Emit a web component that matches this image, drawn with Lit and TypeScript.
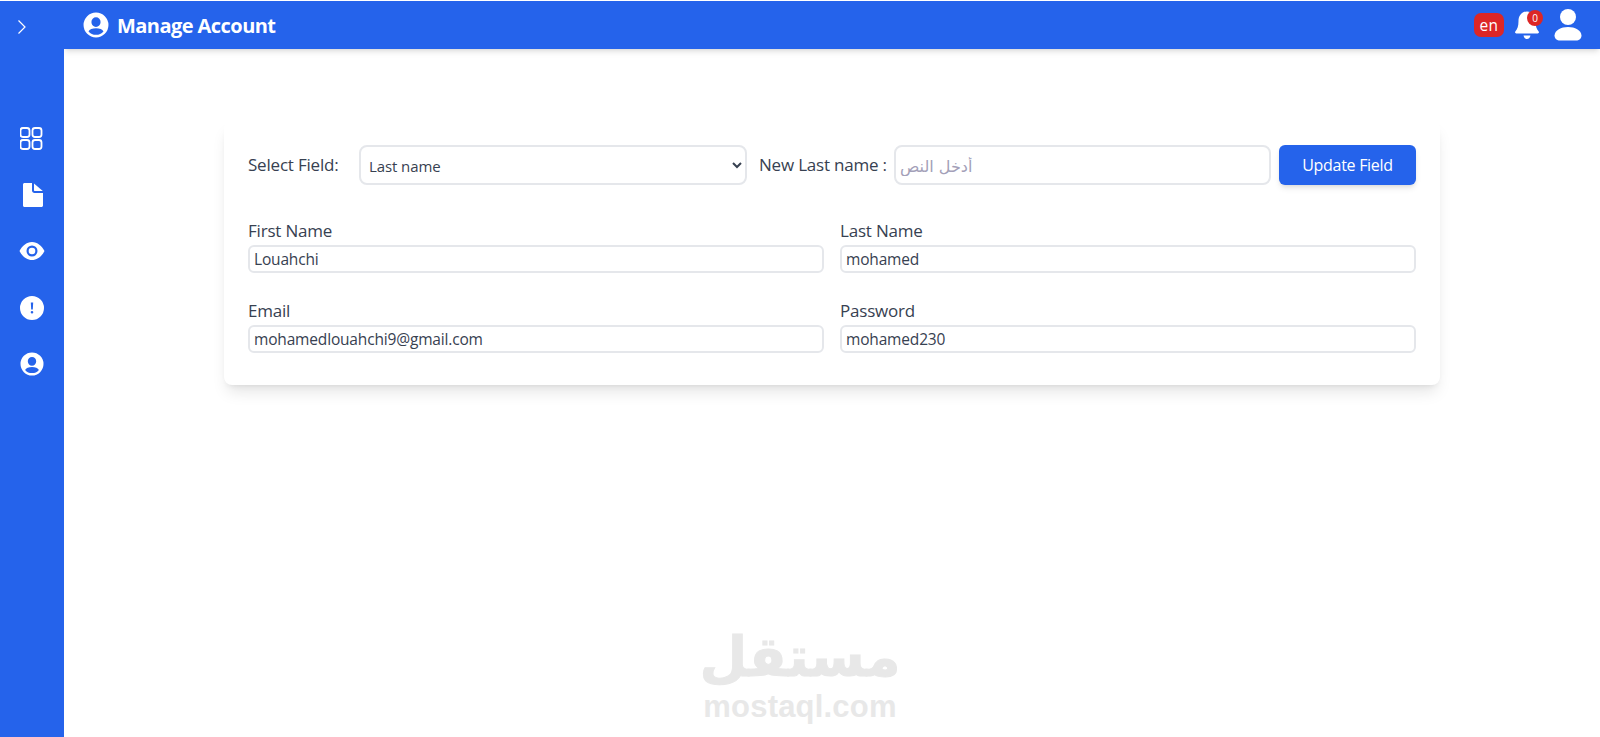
import { LitElement, html, css, svg } from "lit";
import { customElement } from "lit/decorators.js";

const personCircle = svg`<path fill="currentColor" d="M12 0.500a11.500 11.500 0 1 0 0 23a11.500 11.500 0 0 0 0-23Zm0 4.400a4.200 4.200 0 0 1 4.200 4.400c0 2.500-1.900 4.500-4.200 4.500s-4.200-2-4.200-4.500A4.200 4.200 0 0 1 12 4.900Zm0 16.200a9 9 0 0 1-6.900-3.200c.9-1.800 3.600-2.900 6.900-2.900s6 1.100 6.900 2.900a9 9 0 0 1-6.900 3.200Z"/>`;

@customElement("app-root")
export class AppRoot extends LitElement {
  static styles = css`
    :host { display: block; height: 737px; overflow: hidden; background: #fff; color: #374151;
      font-family: "Open Sans", "Noto Sans", sans-serif; position: relative; }
    .shell { display: flex; height: 736px; padding-top: 1px; }
    .side { width: 64px; flex: none; background: #2563eb; color: #fff; display: flex; flex-direction: column; align-items: center; }
    .chev { height: 48px; box-sizing: border-box; padding-top: 4px; display: flex; align-items: center; justify-content: center; margin-right: 20px; width: 24px; }
    .nav { display: flex; flex-direction: column; align-items: center; margin-top: 77px; gap: 32.5px; }
    .nav svg { display: block; }
    .right { flex: 1; display: flex; flex-direction: column; min-width: 0; }
    .bar { height: 48px; background: #2563eb; color: #fff; display: flex; align-items: center; padding: 0 18px 0 19px; box-shadow: 0 4px 6px -1px rgba(0,0,0,.1), 0 2px 4px -2px rgba(0,0,0,.1); clip-path: inset(0 0 -20px 0); position: relative; }
    .title { display: flex; align-items: center; gap: 8px; font-size: 20px; font-weight: 700; letter-spacing: -.55px; flex: 1; }
    .tools { display: flex; align-items: center; }
    .lang { width: 30px; height: 24px; background: #dc2626; border-radius: 7px; font-size: 15.5px; display: flex; align-items: center; justify-content: center; margin-right: 11px; letter-spacing: .3px; }
    .bell { position: relative; width: 24px; height: 30px; margin-right: 15px; }
    .badge { position: absolute; left: 12px; top: 0; width: 16px; height: 16px; border-radius: 50%; background: #dc2626; font-size: 10px; display: flex; align-items: center; justify-content: center; }
    main { flex: 1; padding: 72px 160px 0; }
    .card { background: #fff; border-radius: 8px; padding: 24px 24px 32px; box-shadow: 0 10px 15px -3px rgba(0,0,0,.1), 0 4px 6px -4px rgba(0,0,0,.1); display: flex; flex-direction: column; gap: 32px; }
    .top { display: flex; align-items: center; }
    .lbl { font-size: 17px; letter-spacing: -.2px; white-space: nowrap; line-height: 24px; }
    .l1 { width: 111px; flex: none; }
    .l2 { width: 135px; flex: none; margin-left: 12px; }
    select { width: 388px; flex: none; height: 40px; border: 2px solid #e5e7eb; border-radius: 8px; background: #fff; color: #374151; font: 15px "Open Sans", sans-serif; letter-spacing: -.1px; padding: 2px 4px 0; box-sizing: border-box; outline: none; }
    .newv { width: 377px; flex: none; height: 40px; box-sizing: border-box; border: 2px solid #e5e7eb; border-radius: 8px; padding: 2px 4px 0; font: 16px "DejaVu Sans", sans-serif; text-align: left; outline: none; }
    .newv::placeholder { color: #a3a0b8; }
    button { margin-left: 8px; width: 137px; height: 40px; flex: none; border: 0; border-radius: 6px; background: #2563eb; color: #fff; font: 500 16px "Open Sans", sans-serif; letter-spacing: -.3px; box-shadow: 0 4px 6px -1px rgba(0,0,0,.1), 0 2px 4px -2px rgba(0,0,0,.1); }
    .grid { display: grid; grid-template-columns: 1fr 1fr; column-gap: 16px; row-gap: 24px; }
    .f { display: flex; flex-direction: column; }
    .f .lbl { line-height: 28px; }
    .f input { height: 28px; box-sizing: border-box; border: 2px solid #e5e7eb; border-radius: 6px; padding: 0 4px; color: #374151; font: 15.5px "Open Sans", sans-serif; letter-spacing: -.17px; outline: none; width: 100%; }
    .mark { position: absolute; left: 704px; top: 623px; width: 192px; color: #e8e8e8; display: flex; flex-direction: column; align-items: center; pointer-events: none; }
    .ar { font: 700 55px/68px "DejaVu Sans", sans-serif; white-space: nowrap; -webkit-text-stroke: 1px #e8e8e8; }
    .en { font: 700 31px/32px "Liberation Sans", sans-serif; letter-spacing: .2px; white-space: nowrap; }
  `;

  field(label: string, value: string) {
    return html`<label class="f"><span class="lbl">${label}</span><input .value=${value} /></label>`;
  }

  render() {
    return html`
      <div class="shell">
        <aside class="side">
          <div class="chev"><svg width="12" height="16" viewBox="0 0 12 16" fill="none" stroke="currentColor" stroke-width="1.2"><path d="M2.500 1.500 9 8l-6.500 6.500"/></svg></div>
          <nav class="nav">
            <svg width="24" height="24" viewBox="1.500 0 24 24" fill="none" stroke="currentColor" stroke-width="1.8"><rect x="2" y="2" width="9" height="9" rx="2.500"/><rect x="14" y="2" width="9" height="9" rx="2.500"/><rect x="2" y="14" width="9" height="9" rx="2.500"/><rect x="14" y="14" width="9" height="9" rx="2.500"/></svg>
            <svg width="24" height="24" viewBox="0 0 24 24" fill="currentColor"><path d="M3 1.500C3 .7 3.700 0 4.500 0H12v7.500c0 1.400 1.100 2.500 2.500 2.500H23v12.500c0 .8-.7 1.500-1.500 1.500h-17C3.700 24 3 23.300 3 22.500Z"/><path d="M14 .5 22.800 8h-8.300c-.3 0-.5-.2-.5-.5Z"/></svg>
            <svg width="26" height="24" viewBox="0 0 26 24" fill="currentColor"><path fill-rule="evenodd" d="M13 3C7.500 3 3 7 .5 12 3 17 7.500 21 13 21s10-4 12.500-9C23 7 18.500 3 13 3Zm0 3.500a5.500 5.500 0 1 1 0 11 5.500 5.500 0 0 1 0-11Z"/><circle cx="13" cy="12" r="3.300"/></svg>
            <svg width="24" height="24" viewBox="0 0 24 24" fill="currentColor"><path fill-rule="evenodd" d="M12 0a12 12 0 1 0 0 24 12 12 0 0 0 0-24Zm-1.200 6.500h2.400l-.4 7h-1.600Zm1.200 8.500a1.300 1.300 0 1 1 0 2.600 1.300 1.300 0 0 1 0-2.600Z"/></svg>
            <svg width="24" height="24" viewBox="0 0 24 24">${personCircle}</svg>
          </nav>
        </aside>
        <div class="right">
          <header class="bar">
            <div class="title"><svg width="26" height="26" viewBox="0 0 24 24">${personCircle}</svg><span>Manage Account</span></div>
            <div class="tools">
              <div class="lang">en</div>
              <div class="bell">
                <svg width="24" height="30" viewBox="0 0 24 30" fill="currentColor"><path d="M12 1.500c-5.500 0-8.500 4.500-8.500 9.500 0 5-1 8-3.200 10.500-.6 1 0 2 1 2h21.400c1 0 1.600-1 1-2C21.500 19 20.500 16 20.500 11c0-5-3-9.500-8.500-9.500Z"/><path d="M8.500 25.500h7C15 28 13.500 29 12 29s-3-1-3.500-3.500Z"/></svg>
                <span class="badge">0</span>
              </div>
              <svg width="28" height="32" viewBox="0 0 28 32" fill="currentColor"><circle cx="14" cy="8" r="8"/><path d="M14 18c-7 0-13 3-13.500 8.500C.5 29.500 3 31.500 6 31.500h16c3 0 5.500-2 5.500-5C27 21 21 18 14 18Z"/></svg>
            </div>
          </header>
          <main>
            <section class="card">
              <div class="top">
                <span class="lbl l1">Select Field:</span>
                <select><option>Last name</option><option>First name</option><option>Email</option><option>Password</option></select>
                <span class="lbl l2">New Last name :</span>
                <input class="newv" dir="rtl" placeholder="أدخل النص" />
                <button>Update Field</button>
              </div>
              <div class="grid">
                ${this.field("First Name", "Louahchi")}
                ${this.field("Last Name", "mohamed")}
                ${this.field("Email", "mohamedlouahchi9@gmail.com")}
                ${this.field("Password", "mohamed230")}
              </div>
            </section>
          </main>
        </div>
      </div>
      <div class="mark"><span class="ar">مستقل</span><span class="en">mostaql.com</span></div>
    `;
  }
}
